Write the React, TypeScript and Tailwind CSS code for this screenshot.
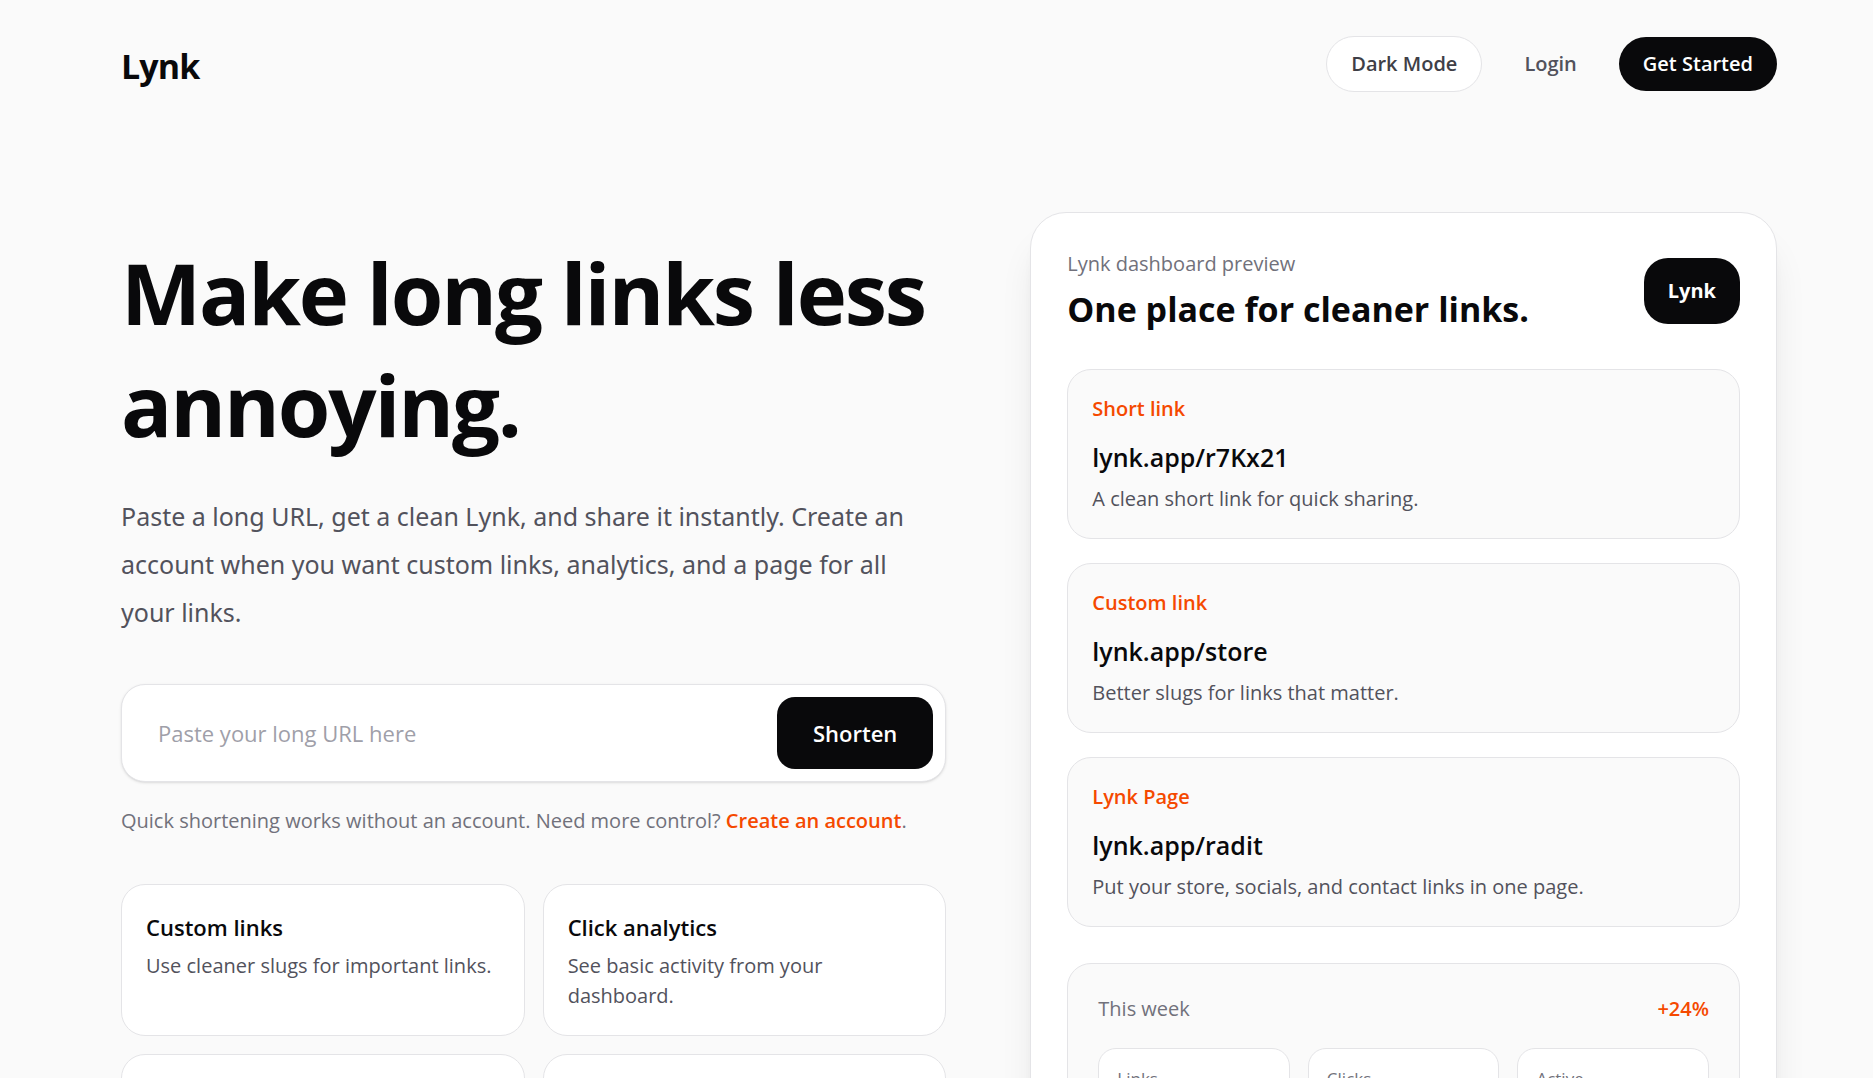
const features = [
  { title: "Custom links", text: "Use cleaner slugs for important links." },
  { title: "Click analytics", text: "See basic activity from your dashboard." },
  { title: "Lynk Page", text: "Put all of your links on one page." },
  { title: "QR codes", text: "Share your links anywhere you want." },
];

const links = [
  { label: "Short link", url: "lynk.app/r7Kx21", text: "A clean short link for quick sharing." },
  { label: "Custom link", url: "lynk.app/store", text: "Better slugs for links that matter." },
  { label: "Lynk Page", url: "lynk.app/radit", text: "Put your store, socials, and contact links in one page." },
];

const stats = [
  { label: "Links", value: "12" },
  { label: "Clicks", value: "840" },
  { label: "Active", value: "9" },
];

function Header() {
  return (
    <header className="flex items-center justify-between pt-9">
      <a href="#" className="pt-1 text-[34px] leading-[48px] font-bold tracking-tight">
        Lynk
      </a>
      <nav className="flex items-center gap-[18px] font-semibold">
        <button type="button" className="rounded-full border border-zinc-200 bg-white px-6 py-3 text-zinc-700">
          Dark Mode
        </button>
        <a href="#login" className="px-6 py-3 text-zinc-600">
          Login
        </a>
        <a href="#register" className="rounded-full bg-zinc-950 px-6 py-3 text-white">
          Get Started
        </a>
      </nav>
    </header>
  );
}

function Hero() {
  return (
    <section className="pt-6">
      <h1 className="text-[85px] leading-[112px] font-bold tracking-tight">Make long links less annoying.</h1>
      <p className="mt-8 max-w-[810px] font-['Noto_Sans',sans-serif] text-[25px] leading-[48px] text-zinc-600">
        Paste a long URL, get a clean Lynk, and share it instantly. Create an account when you want custom links,
        analytics, and a page for all your links.
      </p>

      <form
        className="mt-12 flex rounded-3xl border border-zinc-200 bg-white p-3 shadow-sm"
        onSubmit={(event) => event.preventDefault()}
      >
        <input
          type="url"
          aria-label="Long URL"
          placeholder="Paste your long URL here"
          className="min-w-0 flex-1 px-6 text-[22px] leading-9 outline-none placeholder:text-zinc-400"
        />
        <button type="submit" className="rounded-[18px] bg-zinc-950 px-9 py-[18px] text-[22px] leading-9 font-semibold text-white">
          Shorten
        </button>
      </form>

      <p className="mt-6 text-zinc-500">
        Quick shortening works without an account. Need more control?{" "}
        <a href="#register" className="font-semibold text-[#f54900]">
          Create an account
        </a>
        .
      </p>

      <div className="mt-12 grid grid-cols-2 gap-[18px]">
        {features.map((feature) => (
          <article key={feature.title} className="rounded-3xl border border-zinc-200 bg-white p-6">
            <h3 className="text-[22px] leading-9 font-semibold">{feature.title}</h3>
            <p className="mt-1.5 text-zinc-600">{feature.text}</p>
          </article>
        ))}
      </div>
    </section>
  );
}

function Preview() {
  return (
    <section className="rounded-[36px] border border-zinc-200 bg-white p-9 shadow-[0_30px_38px_-8px_rgba(0,0,0,0.1),0_12px_15px_-9px_rgba(0,0,0,0.1)]">
      <div className="flex items-center justify-between">
        <div>
          <p className="text-zinc-500">Lynk dashboard preview</p>
          <h2 className="mt-1.5 text-[34px] leading-[48px] font-bold">One place for cleaner links.</h2>
        </div>
        <div className="rounded-3xl bg-zinc-950 px-6 py-[18px] font-bold text-white">Lynk</div>
      </div>

      <div className="mt-9 grid gap-6">
        {links.map((link) => (
          <article key={link.url} className="rounded-3xl border border-zinc-200 bg-zinc-50 p-6">
            <p className="font-semibold text-[#f54900]">{link.label}</p>
            <p className="mt-3 text-[25px] leading-[42px] font-semibold">{link.url}</p>
            <p className="mt-1.5 text-zinc-600">{link.text}</p>
          </article>
        ))}
      </div>

      <div className="mt-9 rounded-3xl border border-zinc-200 bg-zinc-50 p-[30px]">
        <div className="flex items-center justify-between">
          <p className="text-zinc-500">This week</p>
          <p className="font-semibold text-[#f54900]">+24%</p>
        </div>
        <div className="mt-6 grid grid-cols-3 gap-[18px]">
          {stats.map((stat) => (
            <div key={stat.label} className="rounded-[18px] border border-zinc-200 bg-white p-[18px]">
              <p className="text-[17px] leading-6 text-zinc-500">{stat.label}</p>
              <p className="mt-1.5 text-[25px] leading-[42px] font-bold">{stat.value}</p>
            </div>
          ))}
        </div>
      </div>
    </section>
  );
}

export default function App() {
  return (
    <div className="h-screen overflow-hidden bg-zinc-50 pr-24 pl-[121px] font-['Open_Sans',sans-serif] text-[20px] leading-[30px] text-zinc-950">
      <Header />
      <main className="mt-[120px] grid grid-cols-[1.05fr_0.95fr] items-start gap-[84px]">
        <Hero />
        <Preview />
      </main>
    </div>
  );
}
